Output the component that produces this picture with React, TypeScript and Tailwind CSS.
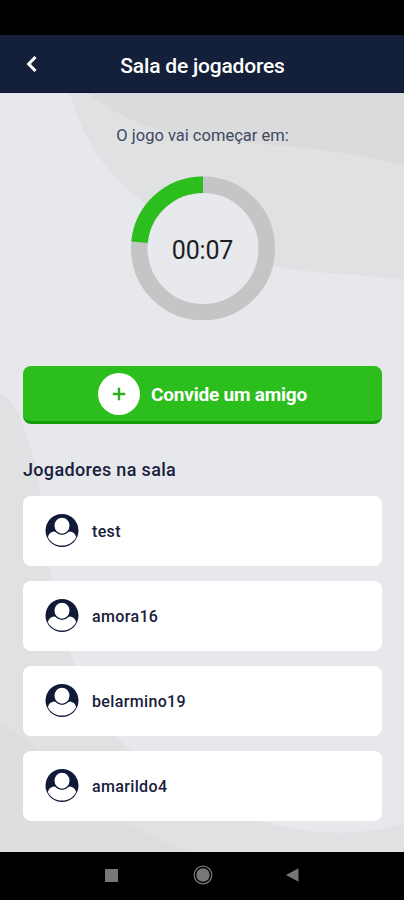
import React from "react";

const players = ["test", "amora16", "belarmino19", "amarildo4"];

const Backdrop: React.FC = () => (
  <svg viewBox="0 0 404 759" className="absolute inset-0 h-full w-full" aria-hidden="true">
    <path d="M70 0C78 36 105 82 140 107C178 142 225 168 275 174C318 181 360 181 404 187V0Z" fill="#e0e1e3" />
    <path d="M88 0C120 26 165 44 215 48C290 52 350 58 404 73V0Z" fill="#d9dbdd" />
    <path d="M0 300C20 312 32 350 39 392C43 430 46 455 51 480C60 535 80 610 125 652C170 692 210 716 265 729C310 743 360 743 404 731V759H0Z" fill="#e0e1e3" />
    <path d="M0 632C35 644 50 680 85 704C120 728 150 745 190 759H0Z" fill="#dbdddf" />
  </svg>
);

const CountdownRing: React.FC<{ label: string }> = ({ label }) => (
  <div className="relative flex h-36 w-36 items-center justify-center">
    <svg viewBox="0 0 144 144" className="absolute inset-0 h-full w-full" fill="none" strokeWidth="16.5">
      <circle cx="72" cy="72.4" r="63.75" fill="#e7e9ed" stroke="#c5c5c5" />
      <path d="M8.55 66.2A63.75 63.75 0 0 1 72 8.65" stroke="#2bbe1d" />
    </svg>
    <span className="relative pt-[5px] text-[25px] leading-none tracking-[-0.2px] text-[#1d1e24]">{label}</span>
  </div>
);

const PlayerAvatar: React.FC = () => (
  <svg viewBox="0 0.5 34 34" className="h-[34px] w-[34px] shrink-0" fill="none">
    <circle cx="17" cy="17" r="16.5" fill="#101a38" />
    <path d="M2.9 23.4C3.6 20.5 5.6 18.4 8.6 17.9L17 19.5L25.4 17.9C28.4 18.4 30.4 20.5 31.1 23.4C28.8 28.7 23.5 32 17 32S5.2 28.7 2.9 23.4Z" fill="#fff" />
    <ellipse cx="17" cy="12.2" rx="8.1" ry="8.6" fill="#fff" stroke="#101a38" strokeWidth="1.2" />
  </svg>
);

export default function App() {
  return (
    <div className="flex h-[900px] w-[404px] flex-col overflow-hidden bg-black font-['Roboto',sans-serif]">
      {/* Status bar area */}
      <div className="h-[35px] shrink-0" />

      <header className="grid h-[58px] shrink-0 grid-cols-[64px_1fr_64px] items-center border-b border-[#0a1238] bg-[#141f39]">
        <button className="flex justify-center pt-px" aria-label="Voltar">
          <svg viewBox="0 0 12 18" className="h-[18px] w-3" fill="none" stroke="#fff" strokeWidth="3.1">
            <path d="M9.5 2L2.7 9L9.5 16" />
          </svg>
        </button>
        <h1 className="pt-1 pl-px text-center text-[21px] leading-7 font-medium tracking-[-0.2px] whitespace-nowrap text-white">Sala de jogadores</h1>
      </header>

      <main className="relative h-[759px] shrink-0 bg-[#e6e8ec]">
        <Backdrop />
        <div className="relative flex flex-col pt-[31px] pr-[22px] pl-[23px]">
          <p className="text-center text-[16.5px] leading-6 text-[#414860]">O jogo vai começar em:</p>
          <div className="mt-[28px] flex justify-center">
            <CountdownRing label="00:07" />
          </div>

          <button className="mt-[46px] flex h-[58px] items-center justify-center rounded-lg border-b-3 border-[#16990c] bg-[#2bbe1d]">
            <span className="flex h-[42px] w-[42px] items-center justify-center rounded-full bg-white">
              <svg viewBox="0 0 14 14" className="h-3.5 w-3.5" stroke="#2bae20" strokeWidth="2.4">
                <path d="M7 .8V13.2M.8 7H13.2" />
              </svg>
            </span>
            <span className="ml-[11px] pt-[2px] text-[19px] leading-6 font-bold tracking-[-0.2px] text-white">Convide um amigo</span>
          </button>

          <h2 className="mt-[34px] text-lg leading-6 font-medium tracking-[0.33px] text-[#18203b]">Jogadores na sala</h2>
          <ul className="mt-[14px] flex flex-col gap-[15px]">
            {players.map((name) => (
              <li key={name} className="flex h-[70px] items-center rounded-lg bg-white pl-[22px]">
                <PlayerAvatar />
                <span className="ml-[13px] pt-[2px] text-base leading-5 font-medium tracking-[0.35px] text-[#18203b]">{name}</span>
              </li>
            ))}
          </ul>
        </div>
      </main>

      {/* Android navigation */}
      <nav className="flex h-[46px] shrink-0 items-center bg-black pl-[105px]">
        <span className="h-[13px] w-[13px] bg-[#777]" />
        <svg viewBox="0 0 20 20" className="ml-[75px] h-5 w-5" fill="none">
          <circle cx="10" cy="10" r="8.8" stroke="#777" strokeWidth="1.3" />
          <circle cx="10" cy="10" r="6.7" fill="#777" />
        </svg>
        <svg viewBox="0 0 13 14" className="ml-[73px] h-3.5 w-[13px]" fill="#777">
          <path d="M0 7L12.5 .2V13.8Z" />
        </svg>
      </nav>
    </div>
  );
}
